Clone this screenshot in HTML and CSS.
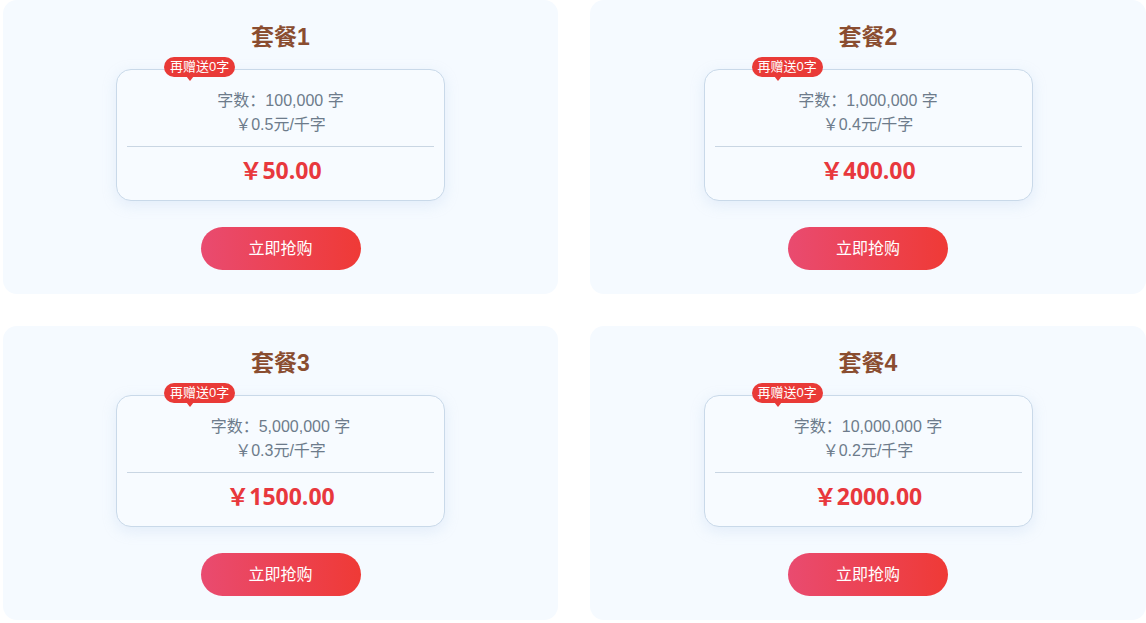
FILE: index.html
```html
<!DOCTYPE html>
<html lang="zh-CN">
<head>
<meta charset="utf-8">
<title>套餐</title>
<link rel="stylesheet" href="styles.css">
</head>
<body>
<div class="grid">
  <div class="card">
    <div class="title">套餐1</div>
    <div class="box">
      <span class="badge">再赠送0字</span>
      <div class="line">字数：100,000 字</div>
      <div class="line">￥0.5元/千字</div>
      <div class="divider"></div>
      <div class="price">￥50.00</div>
    </div>
    <button class="buy">立即抢购</button>
  </div>
  <div class="card">
    <div class="title">套餐2</div>
    <div class="box">
      <span class="badge">再赠送0字</span>
      <div class="line">字数：1,000,000 字</div>
      <div class="line">￥0.4元/千字</div>
      <div class="divider"></div>
      <div class="price">￥400.00</div>
    </div>
    <button class="buy">立即抢购</button>
  </div>
  <div class="card">
    <div class="title">套餐3</div>
    <div class="box">
      <span class="badge">再赠送0字</span>
      <div class="line">字数：5,000,000 字</div>
      <div class="line">￥0.3元/千字</div>
      <div class="divider"></div>
      <div class="price">￥1500.00</div>
    </div>
    <button class="buy">立即抢购</button>
  </div>
  <div class="card">
    <div class="title">套餐4</div>
    <div class="box">
      <span class="badge">再赠送0字</span>
      <div class="line">字数：10,000,000 字</div>
      <div class="line">￥0.2元/千字</div>
      <div class="divider"></div>
      <div class="price">￥2000.00</div>
    </div>
    <button class="buy">立即抢购</button>
  </div>
</div>
</body>
</html>
```
FILE: styles.css
```css
html, body {
  margin: 0;
  padding: 0;
  background: #ffffff;
  font-family: "Liberation Sans", "Noto Sans CJK SC", sans-serif;
}
.grid {
  display: grid;
  grid-template-columns: 555px 556px;
  column-gap: 32px;
  row-gap: 32px;
  padding-left: 3px;
}
.card {
  background: #f5faff;
  border-radius: 14px;
  height: 294px;
  box-sizing: border-box;
  padding-top: 22px;
  display: flex;
  flex-direction: column;
  align-items: center;
}
.title {
  font-size: 23px;
  line-height: 30px;
  font-weight: bold;
  color: #8a4d30;
}
.box {
  position: relative;
  margin-top: 17px;
  width: 329px;
  height: 132px;
  box-sizing: border-box;
  border: 1px solid #c9d9e9;
  border-radius: 15px;
  background: #f7fbff;
  box-shadow: 0 4px 14px rgba(170, 200, 230, 0.25);
  padding: 19px 10px 0;
  text-align: center;
}
.line {
  font-size: 16px;
  line-height: 24px;
  color: #6d7b8b;
}
.divider {
  margin-top: 9px;
  border-top: 1px solid #c9d6e3;
}
.price {
  margin-top: 8px;
  font-size: 23px;
  line-height: 30px;
  font-weight: bold;
  color: #e8383d;
  font-family: "Open Sans", "Noto Sans CJK SC", sans-serif;
}
.badge {
  position: absolute;
  left: 47px;
  top: -13px;
  height: 20px;
  padding: 0 6px;
  border-radius: 10px;
  background: #e93a37;
  color: #ffffff;
  font-size: 13px;
  line-height: 20px;
  white-space: nowrap;
}
.badge::after {
  content: "";
  position: absolute;
  left: 22px;
  bottom: -4px;
  border-left: 4px solid transparent;
  border-right: 4px solid transparent;
  border-top: 5px solid #e93a37;
}
.buy {
  margin-top: 26px;
  width: 160px;
  height: 43px;
  border: none;
  border-radius: 22px;
  background: linear-gradient(90deg, #e94b70, #ef3a36);
  color: #ffffff;
  font-size: 16px;
  font-family: "Liberation Sans", "Noto Sans CJK SC", sans-serif;
  padding: 0 0 3px;
}
```
